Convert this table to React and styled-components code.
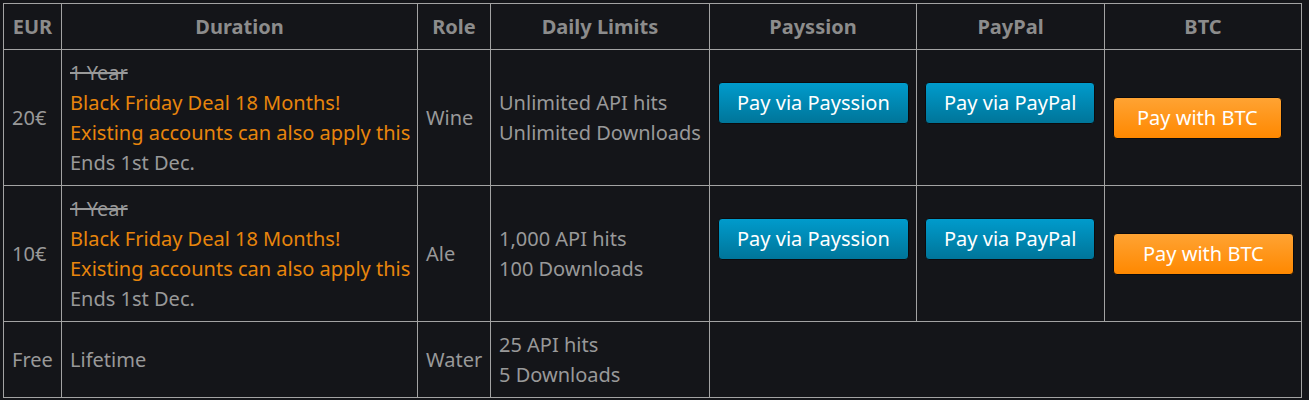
import React from "react";
import styled, { createGlobalStyle } from "styled-components";

const Global = createGlobalStyle`
  html, body { margin: 0; padding: 0; background: #141519; }
  body { font-family: "Noto Sans", "Open Sans", sans-serif; }
`;

const Page = styled.div`
  padding: 3px 8px 3px 3px;
  background: #141519;
  min-height: 400px;
  box-sizing: border-box;
`;

const Table = styled.table`
  border-collapse: collapse;
  table-layout: fixed;
  width: 1298px;
  font-size: 20px;
  line-height: 30px;
  color: #999999;
`;

const Th = styled.th`
  border: 1px solid #a3a3a3;
  padding: 8px 8px 7px;
  font-weight: 700;
  color: #8c8c8c;
  text-align: center;
  vertical-align: middle;
`;

const Td = styled.td`
  border: 1px solid #a3a3a3;
  padding: 8px 8px 7px;
  vertical-align: middle;
  text-align: left;
`;

const Line = styled.div`
  color: ${(p) => (p.$deal ? "#e8850c" : "#999999")};
  text-decoration: ${(p) => (p.$struck ? "line-through" : "none")};
  white-space: nowrap;
`;

const ButtonBox = styled.div`
  padding-bottom: ${(p) => (p.$trail ? "30px" : "0")};
`;

const PayButton = styled.button`
  font-family: "Noto Sans", "Open Sans", sans-serif;
  font-size: 20px;
  line-height: 30px;
  color: #ffffff;
  padding: 5px ${(p) => p.$px || 18}px;
  border: 1px solid #0b0b0d;
  border-radius: 4px;
  cursor: pointer;
  white-space: nowrap;
  background: ${(p) =>
    p.$variant === "btc"
      ? "linear-gradient(to bottom, #ffa333, #ff8800)"
      : "linear-gradient(to bottom, #009bcc, #007599)"};
`;

const rows = [
  {
    price: "20€",
    role: "Wine",
    limits: ["Unlimited API hits", "Unlimited Downloads"],
    btcPad: 23,
  },
  {
    price: "10€",
    role: "Ale",
    limits: ["1,000 API hits", "100 Downloads"],
    btcPad: 29,
  },
];

export default function App() {
  return (
    <>
      <Global />
      <Page>
        <Table>
          <colgroup>
            <col style={{ width: 58 }} />
            <col style={{ width: 356 }} />
            <col style={{ width: 73 }} />
            <col style={{ width: 219 }} />
            <col style={{ width: 207 }} />
            <col style={{ width: 188 }} />
            <col style={{ width: 197 }} />
          </colgroup>
          <thead>
            <tr>
              <Th>EUR</Th>
              <Th>Duration</Th>
              <Th>Role</Th>
              <Th>Daily Limits</Th>
              <Th>Payssion</Th>
              <Th>PayPal</Th>
              <Th>BTC</Th>
            </tr>
          </thead>
          <tbody>
            {rows.map((r) => (
              <tr key={r.price}>
                <Td>{r.price}</Td>
                <Td>
                  <Line $struck>1 Year</Line>
                  <Line $deal>Black Friday Deal 18 Months!</Line>
                  <Line $deal>Existing accounts can also apply this</Line>
                  <Line>Ends 1st Dec.</Line>
                </Td>
                <Td>{r.role}</Td>
                <Td>
                  {r.limits.map((l) => (
                    <Line key={l}>{l}</Line>
                  ))}
                </Td>
                <Td>
                  <ButtonBox $trail>
                    <PayButton>Pay via Payssion</PayButton>
                  </ButtonBox>
                </Td>
                <Td>
                  <ButtonBox $trail>
                    <PayButton>Pay via PayPal</PayButton>
                  </ButtonBox>
                </Td>
                <Td>
                  <ButtonBox>
                    <PayButton $variant="btc" $px={r.btcPad}>
                      Pay with BTC
                    </PayButton>
                  </ButtonBox>
                </Td>
              </tr>
            ))}
            <tr>
              <Td>Free</Td>
              <Td>Lifetime</Td>
              <Td>Water</Td>
              <Td>
                <Line>25 API hits</Line>
                <Line>5 Downloads</Line>
              </Td>
              <Td colSpan={3} />
            </tr>
          </tbody>
        </Table>
      </Page>
    </>
  );
}
